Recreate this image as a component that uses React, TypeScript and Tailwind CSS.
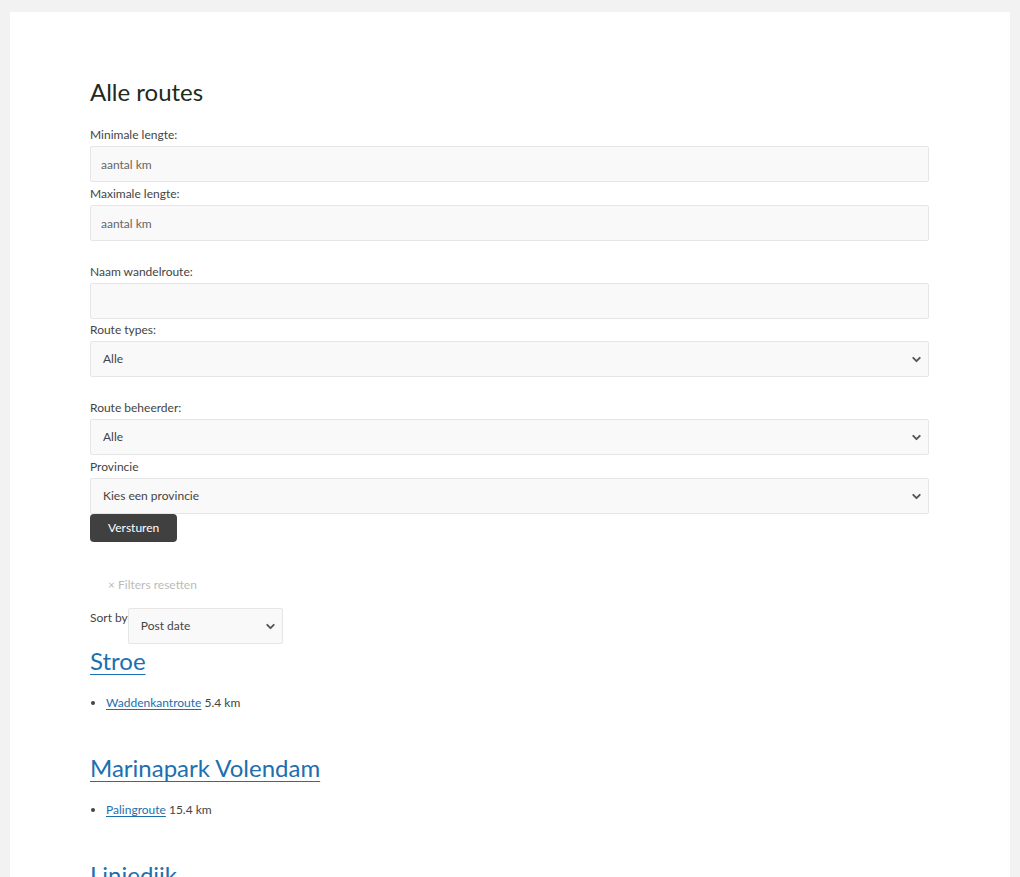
import { ChevronDown } from 'lucide-react';

const font = { fontFamily: 'Lato, "Noto Sans", sans-serif' };

function Label({ children, className = '' }: { children: React.ReactNode; className?: string }) {
  return <label className={`block h-[18px] text-[12px] leading-[18px] text-[#444] ${className}`}>{children}</label>;
}

function TextInput({ placeholder = '' }: { placeholder?: string }) {
  return (
    <input
      type="text"
      placeholder={placeholder}
      className="mt-[2px] block h-[36px] w-full rounded-[2px] border border-[#e6e6e6] bg-[#f9f9f9] px-[10px] text-[12px] text-[#444] placeholder:text-[#666] outline-none"
    />
  );
}

function Select({ value, className = 'w-full' }: { value: string; className?: string }) {
  return (
    <div className={`relative mt-[2px] ${className}`}>
      <select
        defaultValue={value}
        className="block h-[36px] w-full appearance-none rounded-[2px] border border-[#e6e6e6] bg-[#f9f9f9] pl-[12px] text-[12px] text-[#444] outline-none"
      >
        <option>{value}</option>
      </select>
      <ChevronDown size={13} strokeWidth={3.5} className="pointer-events-none absolute right-[6px] top-[12px] text-[#555]" />
    </div>
  );
}

export default function App() {
  const routes = [
    { place: 'Stroe', route: 'Waddenkantroute', km: '5.4 km' },
    { place: 'Marinapark Volendam', route: 'Palingroute', km: '15.4 km' },
    { place: 'Liniedijk', route: 'Liniedijkroute', km: '8.2 km' },
  ];

  return (
    <div className="min-h-screen bg-[#f2f2f2] px-[10px] pt-[12px]" style={font}>
      <div className="bg-white pb-10 pl-[80px] pr-[81px] pt-[65px]">
        <h1 className="text-[24px] leading-[29px] text-[#1f2a20]">Alle routes</h1>

        <form className="mt-[20px]">
          <Label>Minimale lengte:</Label>
          <TextInput placeholder="aantal km" />
          <Label className="mt-[3px]">Maximale lengte:</Label>
          <TextInput placeholder="aantal km" />

          <Label className="mt-[22px]">Naam wandelroute:</Label>
          <TextInput />
          <Label className="mt-[2px]">Route types:</Label>
          <Select value="Alle" />

          <Label className="mt-[22px]">Route beheerder:</Label>
          <Select value="Alle" />
          <Label className="mt-[3px]">Provincie</Label>
          <Select value="Kies een provincie" />

          <button
            type="button"
            className="block h-[28px] rounded-[4px] bg-[#404040] px-[18px] text-[12px] text-white"
          >
            Versturen
          </button>
        </form>

        <div className="mt-[34px] pl-[18px] text-[12px] leading-[18px] text-[#bbb]">× Filters resetten</div>

        <div className="mt-[12px] flex items-start">
          <span className="pt-[3px] text-[12px] leading-[18px] text-[#444]">Sort by</span>
          <Select value="Post date" className="-mt-0 w-[155px]" />
        </div>

        {routes.map((r) => (
          <div key={r.place} className="mb-[39px]">
            <a href="#" className="mt-[2px] inline-block text-[24px] leading-[30px] text-[#1d6fae] underline underline-offset-[4px] decoration-[1px]">
              {r.place}
            </a>
            <ul className="mt-[18px] list-disc pl-[16px] text-[12px] leading-[18px] text-[#444]">
              <li>
                <a href="#" className="text-[#1d6fae] underline underline-offset-2">{r.route}</a> {r.km}
              </li>
            </ul>
          </div>
        ))}
      </div>
    </div>
  );
}
